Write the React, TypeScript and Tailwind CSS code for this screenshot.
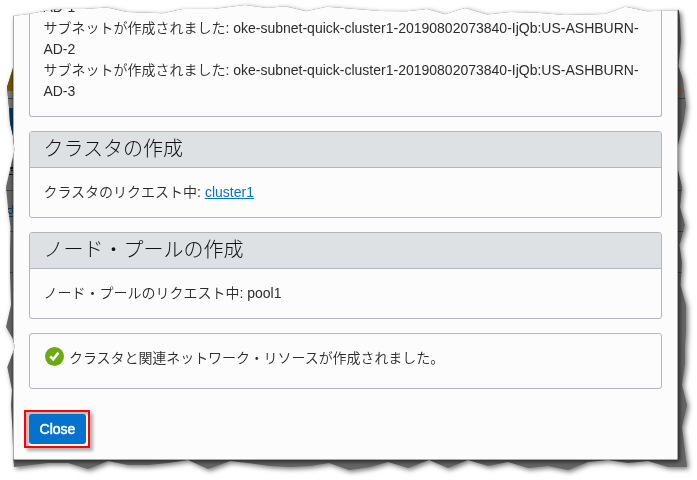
import type { ReactNode } from 'react';

const TORN_EDGE =
  '13,16 29,14 50,10 64,9 83,9 107,7.5 127,12 163,13.3 183,9 213,9 245,5 267,8 285,6.3 306,11.3 327,6.7 380,11 407,11.3 427,9 445,14.3 465,8 487,14.5 510,12 537,12.7 565,15 605,14 625,6.7 647,11.3 679,10.3 ' +
  '680,20 681,40 678.5,66 683,80 686,105 683.5,122 678,145 678,170 682,187 680,207 685,225 679.5,245 682,263 680.5,285 686,305 686,330 685,347 685,363 682,385 687,405 682,427 687,467 ' +
  '668,467 648,461 628,463 608,460 588,462 568,470 548,466 528,468 508,462 488,466 468,460 448,468 429,460 408,468 388,462 370,467 349,470 329,463 310,466 290,467 270,466 248,463 230,461 208,469 188,460 168,463 148,465 128,465 108,461 88,469 68,463 48,463 14,467 ' +
  '13.3,459 12.5,430 11,405 12,390 7.3,367 15,347 12.5,338 6,327 11,305 10,272 10,250 10.5,227 8,208 6,187 14.5,150 13,136 10,123 9,108 7,87 13,68';

const clip = `polygon(${TORN_EDGE.split(' ')
  .map((p) => p.split(',').map((n) => `${n}px`).join(' '))
  .join(', ')})`;

function Backdrop() {
  return (
    <svg className="absolute inset-0" width="697" height="480" viewBox="0 0 697 480" shapeRendering="crispEdges">
      <rect width="697" height="480" fill="#666666" />
      <rect width="14" height="91" fill="#7a5200" />
      <rect y="91" width="14" height="17" fill="#777777" />
      <rect y="108" width="14" height="37" fill="#003a66" />
      <rect x="678" y="14" width="19" height="1" fill="#8a5c00" />
      <rect x="678" y="90" width="19" height="1" fill="#8a5c00" />
      <g fill="#404040">
        <rect y="98" width="697" height="1" />
        <rect y="190" width="697" height="1" />
        <rect y="231" width="697" height="1" />
        <rect y="272" width="697" height="1" />
      </g>
      <path d="M10 167h3v2h-3zM9 174h4v1h-4zM11 170h2v1h-2z" fill="#111" />
      <path d="M11.5 208H9.5Q8 208 8 210.500Q8 213 9.500 213H11.500M12.500 205V213M8 216.500H13" fill="none" stroke="#093e68" />
    </svg>
  );
}

function Panel({ title, children }: { title: string; children: ReactNode }) {
  return (
    <section className="h-[87px] shrink-0 overflow-hidden rounded-[3px] border border-[#b0b7c3]">
      <h2 className="h-9 border-b border-[#b0b7c3] bg-[#dde1e4] pl-[13.4px] text-[20px] leading-[34px] font-light text-[#111]">
        {title}
      </h2>
      <p className="pt-[14px] pl-[13.4px]">{children}</p>
    </section>
  );
}

export default function App() {
  return (
    <div className="h-[480px] w-[697px] overflow-hidden bg-white">
      <div className="h-full w-full drop-shadow-[2px_2px_2.5px_rgba(0,0,0,0.55)]">
        <div className="relative h-full w-full" style={{ clipPath: clip }}>
          <Backdrop />
          <main className="relative ml-[13px] flex h-[460px] w-[665px] flex-col rounded-b-[2px] border border-t-0 border-[#a5abb4] bg-[#fcfcfc] px-[15px] font-['Liberation_Sans','Noto_Sans_CJK_JP',sans-serif] text-[14px] leading-[21px] font-[350] text-[#2c2c2c] shadow-[1px_1px_4px_1px_rgba(0,0,0,0.6)]">
            <section className="flex h-[117px] shrink-0 flex-col justify-end rounded-b-[3px] border border-t-0 border-[#b0b7c3] pb-[14px] pl-[13.4px] whitespace-nowrap">
              <p>AD-1</p>
              <p>
                サブネットが作成されました: oke-subnet-quick-cluster1-20190802073840-IjQb:US-ASHBURN-
                <br />
                AD-2
              </p>
              <p>
                サブネットが作成されました: oke-subnet-quick-cluster1-20190802073840-IjQb:US-ASHBURN-
                <br />
                AD-3
              </p>
            </section>
            <div className="mt-[14px] flex flex-col gap-[14px]">
              <Panel title="クラスタの作成">
                クラスタのリクエスト中:{' '}
                <a href="#cluster1" className="text-[#0572ce] underline">
                  cluster1
                </a>
              </Panel>
              <Panel title="ノード・プールの作成">ノード・プールのリクエスト中: pool1</Panel>
              <section className="flex h-[56px] items-start rounded-[3px] border border-[#b0b7c3] pt-[13px] pl-[15px]">
                <svg width="19" height="19" viewBox="0 0 19 19" className="mr-[5px] shrink-0">
                  <circle cx="9.5" cy="9.5" r="9.5" fill="#6aaa16" />
                  <path d="M5.200 9.300L8.200 12.300L13.500 5.600" fill="none" stroke="#fff" strokeWidth="2.500" />
                </svg>
                <p className="pt-px tracking-[-0.06px]">クラスタと関連ネットワーク・リソースが作成されました。</p>
              </section>
            </div>
            <div className="mt-[21px] -ml-[5px] h-[38px] w-[66px] border-2 border-[#fb0007] p-[2px] pl-[3px] shadow-[3px_3px_3px_rgba(0,0,0,0.3),inset_3px_3px_2px_rgba(0,0,0,0.25)]">
              <button className="h-[30px] w-[57px] rounded-[3px] bg-[#0572ce] font-normal text-white [-webkit-text-stroke:0.5px_white]">
                Close
              </button>
            </div>
          </main>
        </div>
      </div>
    </div>
  );
}
